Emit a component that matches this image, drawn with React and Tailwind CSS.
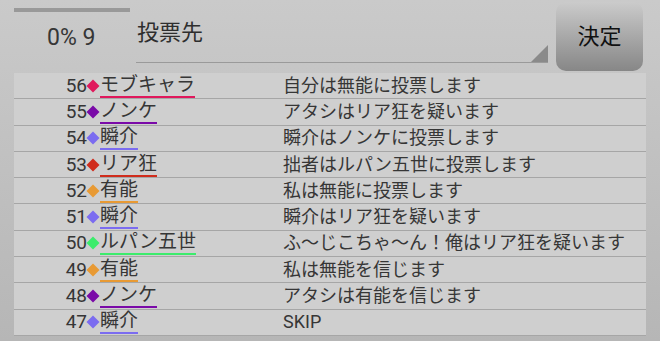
const rows = [
  { no: 56, name: "モブキャラ", color: "#e0185c", msg: "自分は無能に投票します" },
  { no: 55, name: "ノンケ", color: "#7a0aa8", msg: "アタシはリア狂を疑います" },
  { no: 54, name: "瞬介", color: "#7b6cf0", msg: "瞬介はノンケに投票します" },
  { no: 53, name: "リア狂", color: "#d02c1c", msg: "拙者はルパン五世に投票します" },
  { no: 52, name: "有能", color: "#e89a34", msg: "私は無能に投票します" },
  { no: 51, name: "瞬介", color: "#7b6cf0", msg: "瞬介はリア狂を疑います" },
  { no: 50, name: "ルパン五世", color: "#3cec6c", msg: "ふ〜じこちゃ〜ん！俺はリア狂を疑います" },
  { no: 49, name: "有能", color: "#e89a34", msg: "私は無能を信じます" },
  { no: 48, name: "ノンケ", color: "#7a0aa8", msg: "アタシは有能を信じます" },
  { no: 47, name: "瞬介", color: "#7b6cf0", msg: "SKIP" },
];

const font = { fontFamily: "Roboto, 'Noto Sans CJK JP', sans-serif" };

function Diamond({ color }) {
  return (
    <svg width="14" height="14" viewBox="0 0 14 14" className="shrink-0 -ml-[1px]">
      <polygon points="7,0.5 13.5,7 7,13.5 0.5,7" fill={color} />
    </svg>
  );
}

export default function App() {
  return (
    <div
      className="w-[660px] h-[341px] overflow-hidden bg-gradient-to-b from-[#cacaca] to-[#b6b6b6] text-[#363636]"
      style={font}
    >
      {/* header */}
      <div className="flex h-[73px]">
        <div className="w-[136px] pl-[14px] pt-[8px]">
          <div className="h-[4px] w-[116px] bg-[#999]"></div>
          <div className="pl-[33px] pt-[12px] text-[23px] leading-[28px]">0% 9</div>
        </div>
        <div className="relative h-[63px] w-[412px] border-b border-[#9a9a9a]">
          <div className="pl-[1px] pt-[19px] text-[22px] leading-[28px] text-[#2e2e2e]">投票先</div>
          <svg className="absolute right-0 bottom-0" width="17" height="17" viewBox="0 0 17 17">
            <polygon points="17,0 17,17 0,17" fill="#8a8a8a" />
          </svg>
        </div>
        <div className="ml-[8px] mt-[2px] flex h-[69px] w-[87px] items-center justify-center rounded-[10px] bg-gradient-to-b from-[#cbcbcb] to-[#878787] text-[22px] text-[#111]">
          決定
        </div>
      </div>
      {/* list */}
      <div className="ml-[14px] w-[632px] bg-[#cfcfcf]">
        {rows.map((r, i) => (
          <div key={i} className="flex h-[26.3px] items-center border-b border-[#a6a6a6]">
            <div className="flex w-[269px] items-center">
              <span className="w-[73px] text-right text-[19px] leading-[24px]">{r.no}</span>
              <Diamond color={r.color} />
              <span
                className="text-[19px] leading-[22px] border-b-2"
                style={{ borderColor: r.color }}
              >
                {r.name}
              </span>
            </div>
            <div className="text-[18px] leading-[24px]">{r.msg}</div>
          </div>
        ))}
      </div>
    </div>
  );
}
